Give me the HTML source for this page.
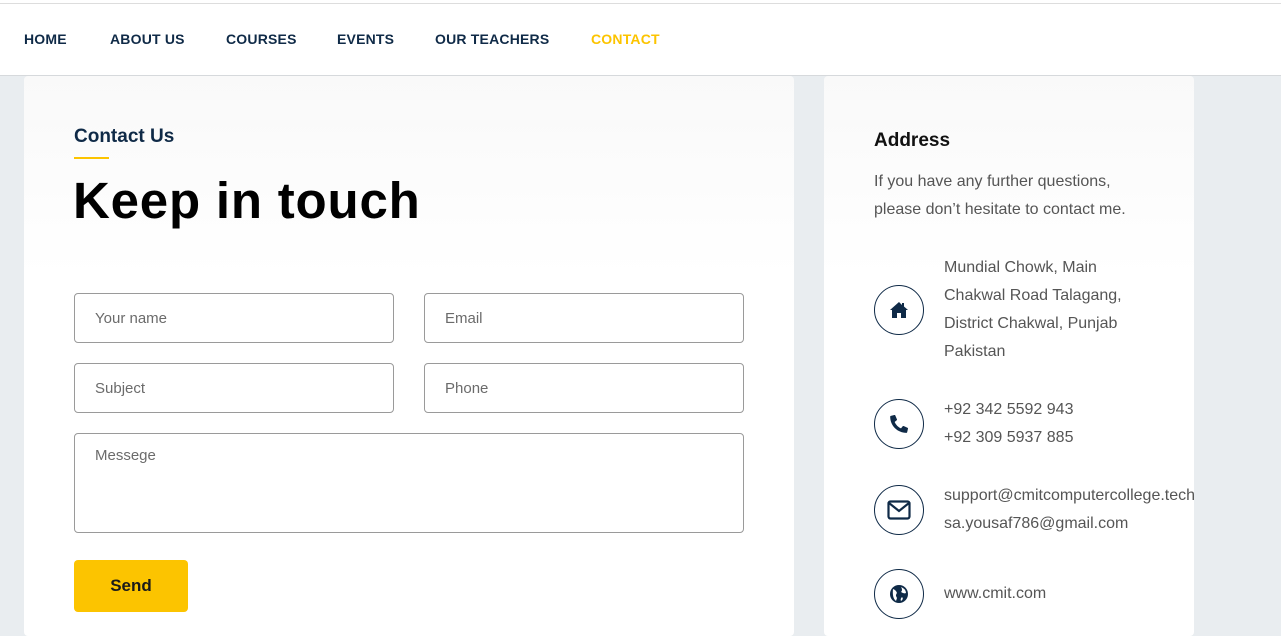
<!DOCTYPE html>
<html><head><meta charset="utf-8"><style>
*{margin:0;padding:0;box-sizing:border-box}
body{width:1281px;height:627px;overflow:hidden;background:#e9edf0;font-family:"Liberation Sans",sans-serif;position:relative}
.topline{position:absolute;left:0;top:0;width:1281px;height:4px;background:#fff;border-bottom:1px solid #ddd}
nav{position:absolute;left:0;top:4px;width:1281px;height:72px;background:#fff;border-bottom:1px solid #d6d9dc}
nav a{position:absolute;top:27px;font-size:14px;font-weight:bold;color:#0f2a47;text-decoration:none;letter-spacing:.2px}
.card{position:absolute;top:76px;height:560px;background:linear-gradient(#f9f9f9,#fff 200px);border-radius:4px}
.abs{position:absolute}
.inp{position:absolute;border:1px solid #9a9a9a;border-radius:4px;background:#fff;font-size:15px;color:#6b6b6b;padding-left:20px}
.t{position:absolute;left:944px;font-size:16px;line-height:28px;color:#555}
.ic{position:absolute;left:874px;width:50px;height:50px;border:1.3px solid #0f2a47;border-radius:50%;display:flex;align-items:center;justify-content:center}
</style></head><body>
<div class="topline"></div>
<nav>
<a style="left:24px">HOME</a><a style="left:110px">ABOUT US</a><a style="left:226px">COURSES</a><a style="left:337px">EVENTS</a><a style="left:435px">OUR TEACHERS</a><a style="left:591px;color:#fcc400">CONTACT</a>
</nav>
<div class="card" style="left:24px;width:770px"></div>
<div class="card" style="left:824px;width:370px"></div>
<div class="abs" style="left:74px;top:126px;font-size:19px;font-weight:bold;color:#0f2a47">Contact Us</div>
<div class="abs" style="left:74px;top:157px;width:35px;height:2px;background:#fcc400"></div>
<div class="abs" style="left:73px;top:171px;font-size:51px;font-weight:bold;color:#000;letter-spacing:0.8px">Keep in touch</div>
<div class="inp" style="left:74px;top:293px;width:320px;height:50px;line-height:50px">Your name</div>
<div class="inp" style="left:424px;top:293px;width:320px;height:50px;line-height:50px">Email</div>
<div class="inp" style="left:74px;top:363px;width:320px;height:50px;line-height:50px">Subject</div>
<div class="inp" style="left:424px;top:363px;width:320px;height:50px;line-height:50px">Phone</div>
<div class="inp" style="left:74px;top:433px;width:670px;height:100px;padding-top:13px">Messege</div>
<div class="abs" style="left:74px;top:560px;width:114px;height:52px;background:#fcc400;border-radius:4px;text-align:center;line-height:52px;font-size:17px;font-weight:bold;color:#1a1a1a">Send</div>

<div class="abs" style="left:874px;top:130px;font-size:19px;font-weight:bold;color:#111">Address</div>
<div class="t" style="left:874px;top:168px">If you have any further questions,<br>please don’t hesitate to contact me.</div>

<div class="ic" style="top:285px"><svg width="20" height="18" viewBox="0 0 20 18"><path d="M10 1 L1 9 L3 9 L3 17 L8 17 L8 12 L12 12 L12 17 L17 17 L17 9 L19 9 L15 5.5 L15 2 L13 2 L13 4 Z" fill="#0f2a47"/></svg></div>
<div class="t" style="top:254px">Mundial Chowk, Main<br>Chakwal Road Talagang,<br>District Chakwal, Punjab<br>Pakistan</div>

<div class="ic" style="top:399px"><svg width="18" height="18" viewBox="0 0 512 512"><path fill="#0f2a47" d="M497 361l-109-47a23 23 0 00-27 7l-48 59A356 356 0 01132 198l59-48a23 23 0 007-27L151 14a24 24 0 00-27-14L23 24A23 23 0 005 46c0 255 206 461 461 461a23 23 0 0022-18l24-101a24 24 0 00-15-27z"/></svg></div>
<div class="t" style="top:396px">+92 342 5592 943<br>+92 309 5937 885</div>

<div class="ic" style="top:485px"><svg width="24" height="20" viewBox="0 0 24 20"><rect x="1.5" y="1.5" width="21" height="17" rx="2" fill="none" stroke="#0f2a47" stroke-width="2.2"/><path d="M2 3 L12 11 L22 3" fill="none" stroke="#0f2a47" stroke-width="2.2"/></svg></div>
<div class="t" style="top:482px">support@cmitcomputercollege.tech<br>sa.yousaf786@gmail.com</div>

<div class="ic" style="top:569px"><svg width="20" height="20" viewBox="0 0 20 20"><circle cx="10" cy="10" r="9" fill="#0f2a47"/><path d="M4 5 Q7 6 8 9 Q6 11 8 14 L7 17 Q3 14 4 5Z M12 3 Q14 6 12 8 Q15 10 17 9 Q17 5 12 3Z M13 13 Q15 15 12 17 Q11 15 13 13Z" fill="#fff"/></svg></div>
<div class="t" style="top:580px">www.cmit.com</div>
</body></html>
